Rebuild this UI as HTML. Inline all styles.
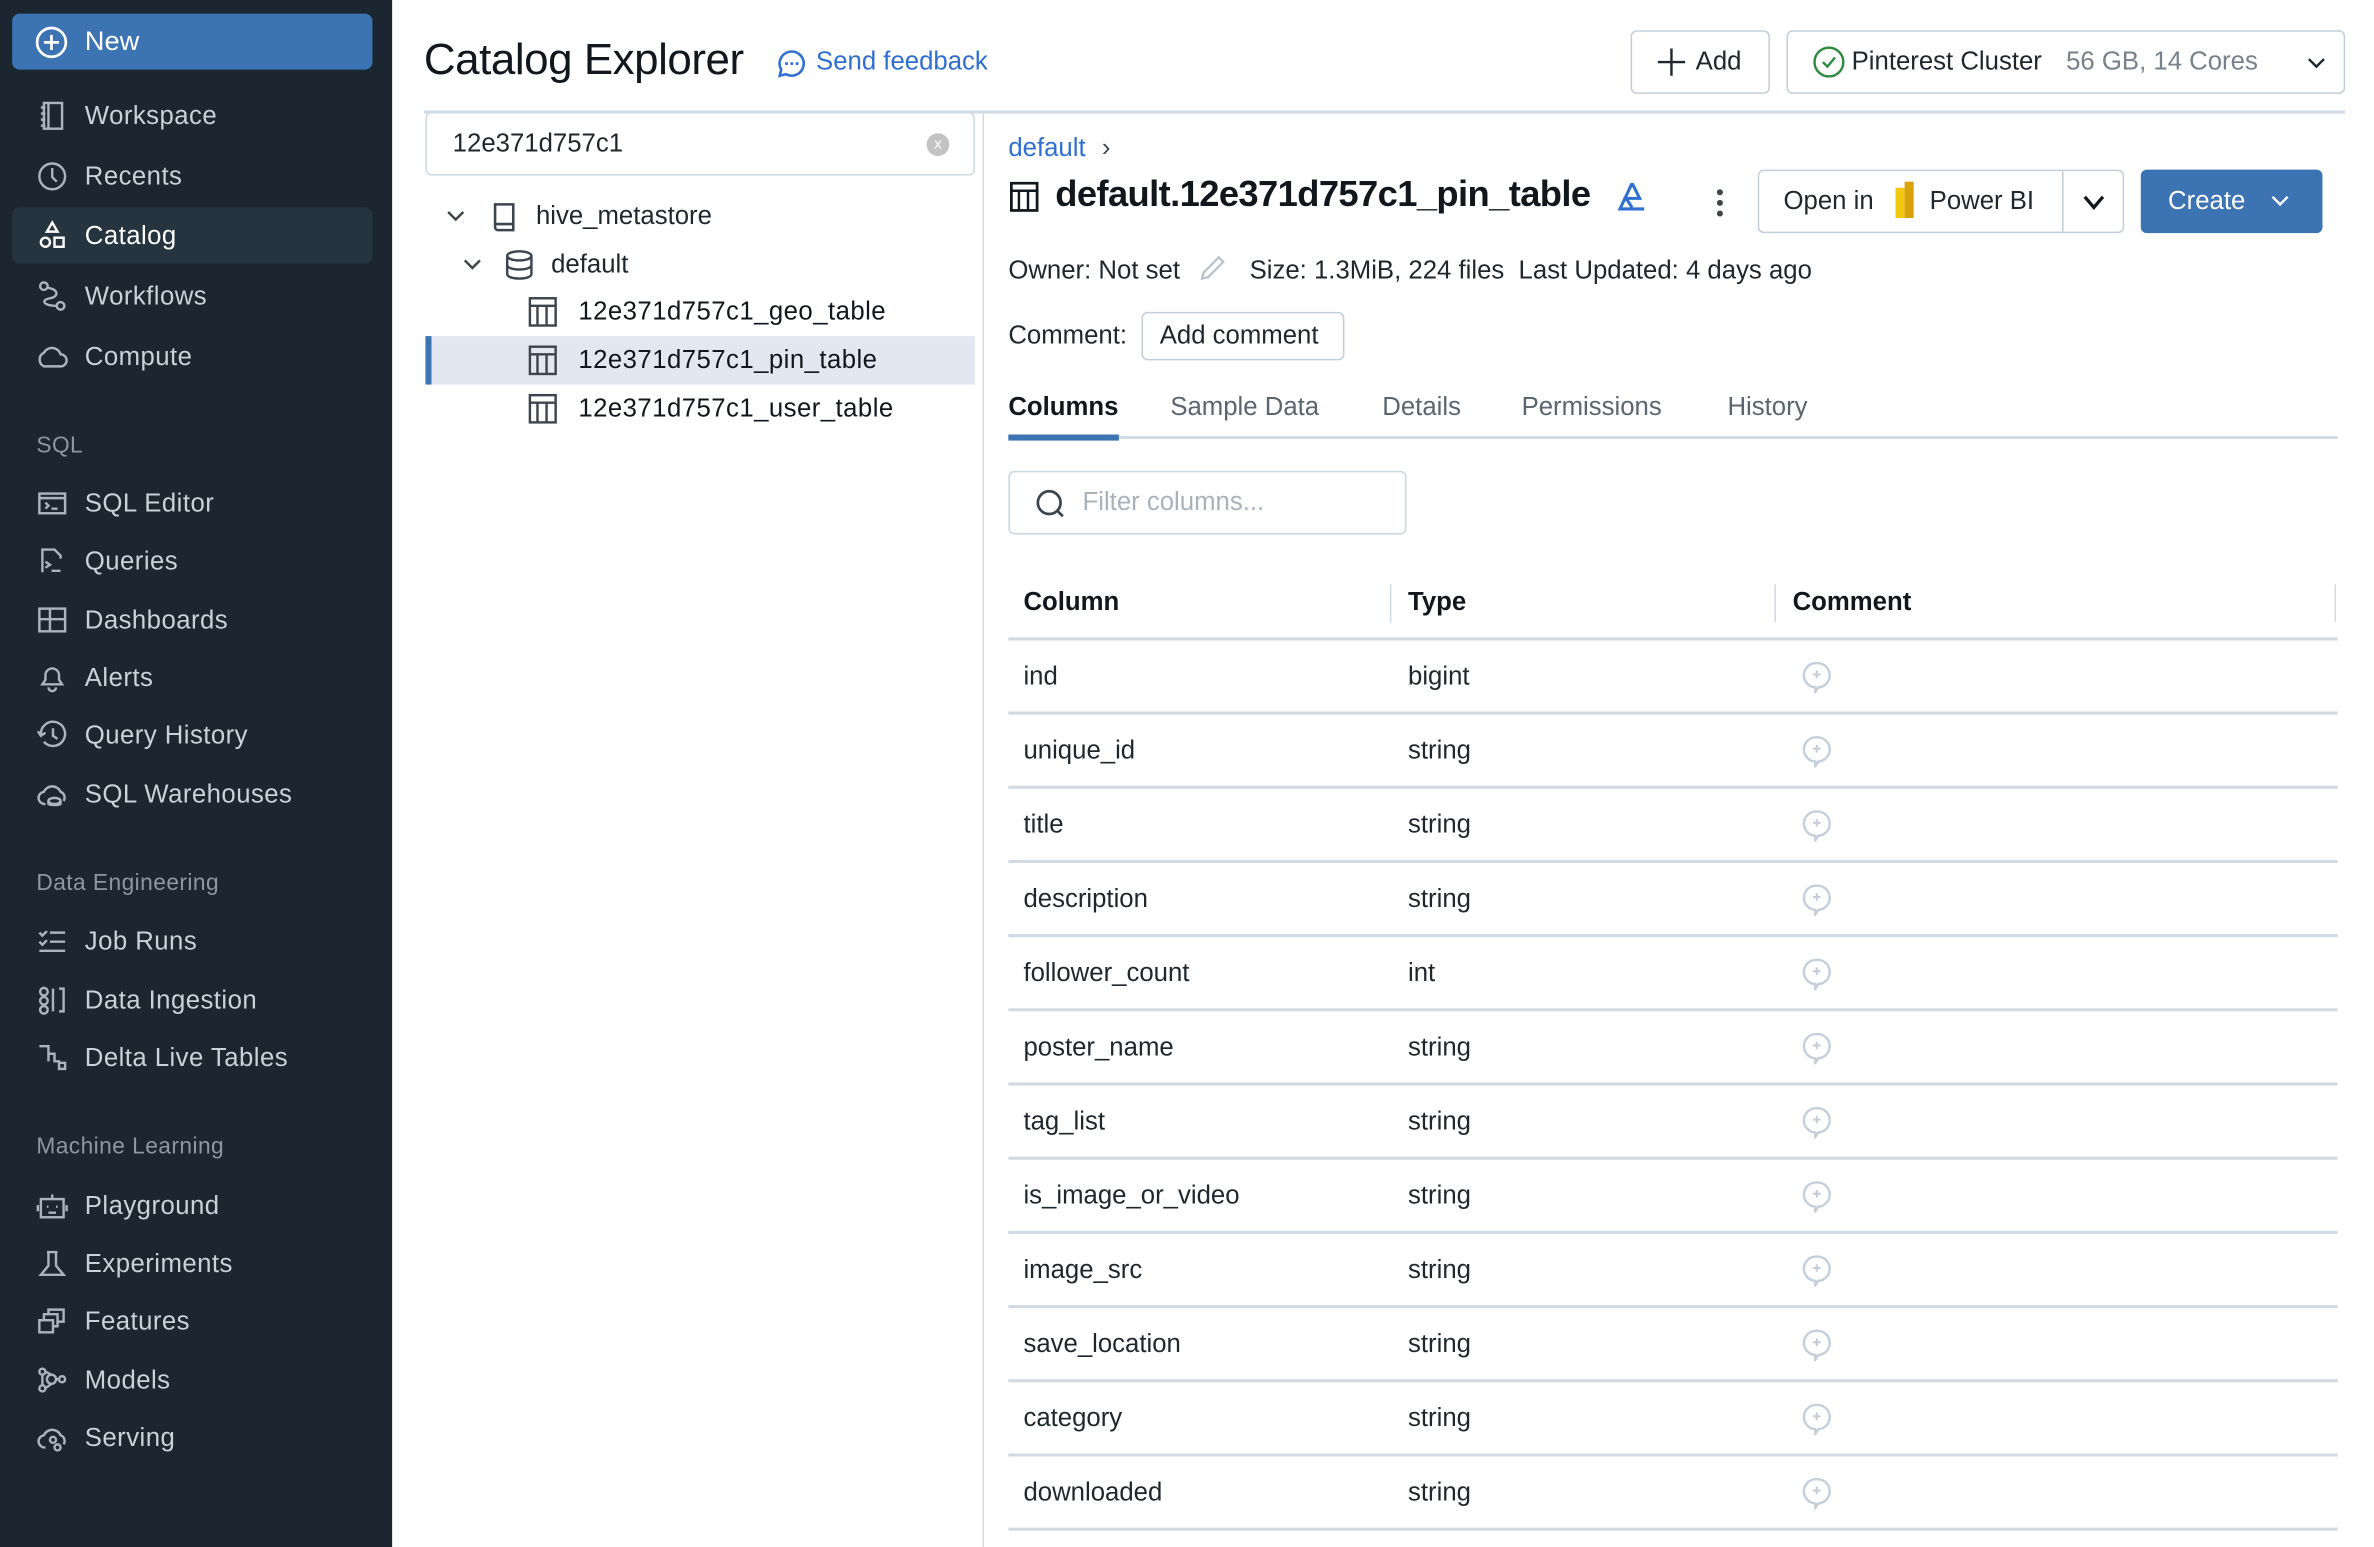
<!DOCTYPE html>
<html><head><meta charset="utf-8"><style>
*{box-sizing:border-box;margin:0;padding:0}
html,body{width:2374px;height:1546px;overflow:hidden;background:#fff}
#w{position:absolute;left:0;top:0;width:1568px;height:1022px;transform:scale(1.514);transform-origin:0 0;font-family:"Liberation Sans",sans-serif;color:#1f272d}
.a{position:absolute}
#sb{left:0;top:0;width:259px;height:1022px;background:#1b2631}
.it{position:absolute;left:8px;width:238px;height:37px;color:#c9d1d9;font-size:17px;line-height:37px;padding-left:48px;letter-spacing:.3px}
.it svg{position:absolute;left:16px;top:8px;width:21px;height:21px;fill:none;stroke:#aab4be;stroke-width:1.6}
.sec{position:absolute;left:24px;color:#8c97a2;font-size:15px;letter-spacing:.3px}
.hl{position:absolute;left:666px;width:878px;height:2px;background:#d1d9e1}
.row{position:absolute;font-size:17px;color:#1f272d}
.btn{position:absolute;border:1px solid #c5ced8;border-radius:4px;background:#fff}
.cm{position:absolute;left:1189px;width:22px;height:22px}
</style></head><body><div id="w">
<div id="sb" class="a">
 <div class="a" style="left:8px;top:9px;width:238px;height:37px;background:#3b73b3;border-radius:5px;color:#fff;font-size:18px;line-height:37px;padding-left:48px">New
  <svg class="a" style="left:15px;top:8px" width="22" height="22" viewBox="0 0 22 22"><circle cx="11" cy="11" r="9.5" fill="none" stroke="#fff" stroke-width="1.8"/><path d="M11 6v10M6 11h10" stroke="#fff" stroke-width="1.8"/></svg></div>
 <div class="it" style="top:58px"><svg viewBox="0 0 21 21"><rect x="5" y="2" width="12" height="17"/><path d="M3 5h3M3 9h3M3 13h3M3 17h3M8 2v17"/></svg>Workspace</div>
 <div class="it" style="top:98px"><svg viewBox="0 0 21 21"><circle cx="10.5" cy="10.5" r="8.5"/><path d="M10.5 5v6l3 3"/></svg>Recents</div>
 <div class="it" style="top:137px;background:#26343f;border-radius:5px;color:#fff"><svg viewBox="0 0 21 21" style="stroke:#fff"><path d="M10.5 2l3.5 6h-7z"/><circle cx="6" cy="15" r="3"/><rect x="12" y="12" width="6" height="6"/></svg>Catalog</div>
 <div class="it" style="top:177px"><svg viewBox="0 0 21 21"><circle cx="5" cy="4" r="2.5"/><circle cx="16" cy="17" r="2.5"/><path d="M7 5c8 1 8 6 2 7s-5 5 5 5"/></svg>Workflows</div>
 <div class="it" style="top:217px"><svg viewBox="0 0 21 21"><path d="M5 17h11a4 4 0 0 0 0-8 6 6 0 0 0-11-1 5 5 0 0 0 0 9z"/></svg>Compute</div>
 <div class="sec" style="top:286px">SQL</div>
 <div class="it" style="top:314px"><svg viewBox="0 0 21 21"><rect x="2" y="4" width="17" height="13"/><path d="M2 7h17M6 10l2 2-2 2M10 14h4"/></svg>SQL Editor</div>
 <div class="it" style="top:352px"><svg viewBox="0 0 21 21"><path d="M4 18V3h8l4 4v2M6 11l3 2-3 2M10 17h6"/></svg>Queries</div>
 <div class="it" style="top:391px"><svg viewBox="0 0 21 21"><rect x="2" y="3" width="17" height="15"/><path d="M2 10h17M9 3v15"/></svg>Dashboards</div>
 <div class="it" style="top:429px"><svg viewBox="0 0 21 21"><path d="M4 15h13l-2-3V9a4.5 4.5 0 0 0-9 0v3zM8 17a2.5 2.5 0 0 0 5 0"/></svg>Alerts</div>
 <div class="it" style="top:467px"><svg viewBox="0 0 21 21"><path d="M3 10a8 8 0 1 1 2 5M1 8l2 3 3-2M11 6v5l3 2"/></svg>Query History</div>
 <div class="it" style="top:506px"><svg viewBox="0 0 21 21"><path d="M6 17a4 4 0 0 1-1-8 6 6 0 0 1 11 0 4 4 0 0 1 2 6"/><ellipse cx="12" cy="15" rx="4" ry="2"/><path d="M8 15v2c0 1 8 1 8 0v-2"/></svg>SQL Warehouses</div>
 <div class="sec" style="top:575px">Data Engineering</div>
 <div class="it" style="top:603px"><svg viewBox="0 0 21 21"><path d="M2 5l2 2 3-3M2 11l2 2 3-3M9 5h10M9 11h10M2 17h17"/></svg>Job Runs</div>
 <div class="it" style="top:642px"><svg viewBox="0 0 21 21"><circle cx="5" cy="5" r="2.5"/><circle cx="5" cy="11" r="2.5"/><circle cx="5" cy="17" r="2.5"/><path d="M11 3v15M15 3h3v15h-3"/></svg>Data Ingestion</div>
 <div class="it" style="top:680px"><svg viewBox="0 0 21 21"><path d="M2 3h6v5h4v5h3v5h4v-4h-4M8 8v5"/></svg>Delta Live Tables</div>
 <div class="sec" style="top:749px">Machine Learning</div>
 <div class="it" style="top:778px"><svg viewBox="0 0 21 21"><rect x="3" y="6" width="15" height="12"/><path d="M10.5 3v3M1 10v4M20 10v4M7 11h1M13 11h1M8 15h5"/></svg>Playground</div>
 <div class="it" style="top:816px"><svg viewBox="0 0 21 21"><path d="M7 3h7M8 3v9l-5 6h15l-5-6V3"/></svg>Experiments</div>
 <div class="it" style="top:854px"><svg viewBox="0 0 21 21"><rect x="2" y="10" width="9" height="8"/><path d="M5 10V6h9v8h-3M8 6V3h10v8h-4"/></svg>Features</div>
 <div class="it" style="top:893px"><svg viewBox="0 0 21 21"><circle cx="4" cy="5" r="2"/><circle cx="4" cy="16" r="2"/><circle cx="17" cy="10" r="2"/><circle cx="10" cy="10" r="3"/><path d="M6 5l4 2M6 16l4-3M13 10h2M4 7v7"/></svg>Models</div>
 <div class="it" style="top:931px"><svg viewBox="0 0 21 21"><path d="M6 17a4 4 0 0 1-1-8 6 6 0 0 1 11 0 4 4 0 0 1 2 6"/><circle cx="11" cy="12" r="2"/><circle cx="14" cy="17" r="2"/></svg>Serving</div>
</div>

<div class="a" style="left:280px;top:24px;font-size:29px;font-weight:500;color:#11171c;letter-spacing:-.3px">Catalog Explorer</div>
<svg class="a" style="left:513px;top:32px" width="20" height="20" viewBox="0 0 20 20"><path d="M10 2a8 8 0 1 1-4 15l-4 1 1-4A8 8 0 0 1 10 2z" fill="none" stroke="#2f6fd1" stroke-width="1.7"/><circle cx="6.5" cy="10" r="1" fill="#2f6fd1"/><circle cx="10" cy="10" r="1" fill="#2f6fd1"/><circle cx="13.5" cy="10" r="1" fill="#2f6fd1"/></svg>
<div class="a" style="left:539px;top:31px;font-size:17px;color:#2f6fd1">Send feedback</div>

<div class="btn" style="left:1077px;top:20px;width:92px;height:42px;font-size:17px;line-height:40px;padding-left:42px">Add<svg class="a" style="left:16px;top:10px" width="20" height="20"><path d="M10 1v18M1 10h18" stroke="#1f272d" stroke-width="1.6"/></svg></div>
<div class="btn" style="left:1180px;top:20px;width:369px;height:42px;font-size:17px;line-height:40px;padding-left:42px">Pinterest Cluster<span style="color:#77818b;margin-left:16px">56 GB, 14 Cores</span>
 <svg class="a" style="left:16px;top:9px" width="22" height="22"><circle cx="11" cy="11" r="9.5" fill="none" stroke="#2d8a3e" stroke-width="1.6"/><path d="M7 11l3 3 5-6" fill="none" stroke="#2d8a3e" stroke-width="1.6"/></svg>
 <svg class="a" style="left:343px;top:16px" width="12" height="10"><path d="M1 2l5 5 5-5" fill="none" stroke="#1f272d" stroke-width="1.6"/></svg></div>

<div class="a" style="left:280px;top:73px;width:1269px;height:2px;background:#d1d9e1"></div>
<div class="a" style="left:649px;top:74px;width:1px;height:948px;background:#d1d9e1"></div>
<div class="btn" style="left:281px;top:74px;width:363px;height:42px;border-color:#d1d9e1;font-size:17px;line-height:40px;padding-left:17px">12e371d757c1<div class="a" style="left:330px;top:13px;width:15px;height:15px;border-radius:50%;background:#c3c3c3;color:#fff;font-size:10px;line-height:15px;text-align:center">x</div></div>

<svg class="a" style="left:294px;top:138px" width="14" height="10"><path d="M2 2l5 5 5-5" fill="none" stroke="#3c454d" stroke-width="1.6"/></svg>
<svg class="a" style="left:324px;top:133px" width="18" height="21"><path d="M3 2h12v17H5a2 2 0 0 1-2-2zM3 15h12" fill="none" stroke="#3c454d" stroke-width="1.7"/></svg>
<div class="row" style="left:354px;top:133px">hive_metastore</div>
<svg class="a" style="left:305px;top:170px" width="14" height="10"><path d="M2 2l5 5 5-5" fill="none" stroke="#3c454d" stroke-width="1.6"/></svg>
<svg class="a" style="left:333px;top:164px" width="20" height="22"><ellipse cx="10" cy="5" rx="8" ry="3" fill="none" stroke="#3c454d" stroke-width="1.6"/><path d="M2 5v12c0 4 16 4 16 0V5M2 11c0 4 16 4 16 0" fill="none" stroke="#3c454d" stroke-width="1.6"/></svg>
<div class="row" style="left:364px;top:165px">default</div>
<div class="a" style="left:281px;top:222px;width:363px;height:32px;background:#e2e8f1"></div>
<div class="a" style="left:281px;top:222px;width:4px;height:32px;background:#3b73b3"></div>
<svg class="a" style="left:349px;top:196px" width="20" height="84"><g fill="none" stroke="#3c454d" stroke-width="1.6"><rect x="1" y="1" width="17" height="18"/><path d="M1 6h17M6 6v13M12 6v13"/><rect x="1" y="33" width="17" height="18"/><path d="M1 38h17M6 38v13M12 38v13"/><rect x="1" y="65" width="17" height="18"/><path d="M1 70h17M6 70v13M12 70v13"/></g></svg>
<div class="row" style="left:382px;top:196px;letter-spacing:.3px;color:#11171c">12e371d757c1_geo_table</div>
<div class="row" style="left:382px;top:228px;letter-spacing:.3px;color:#11171c">12e371d757c1_pin_table</div>
<div class="row" style="left:382px;top:260px;letter-spacing:.3px;color:#11171c">12e371d757c1_user_table</div>

<div class="a" style="left:666px;top:88px;font-size:17px;color:#2f6fd1">default <span style="color:#3c454d;margin-left:6px">›</span></div>
<svg class="a" style="left:667px;top:120px" width="20" height="20"><rect x="1" y="1" width="17" height="18" fill="none" stroke="#11171c" stroke-width="1.8"/><path d="M1 6h17M6 6v13M12 6v13" stroke="#11171c" stroke-width="1.6"/></svg>
<div class="a" style="left:697px;top:115px;font-size:24px;font-weight:700;color:#11171c;letter-spacing:-.4px">default.12e371d757c1_pin_table</div>
<svg class="a" style="left:1067px;top:119px" width="22" height="22"><path d="M11 2L3 19h16M11 2l5 10-9 0 4 6" fill="none" stroke="#2f6fd1" stroke-width="2"/></svg>
<div class="a" style="left:1134px;top:125px;width:4px;height:4px;border-radius:2px;background:#3c454d;box-shadow:0 7px 0 #3c454d,0 14px 0 #3c454d"></div>
<div class="btn" style="left:1161px;top:112px;width:242px;height:42px;font-size:17px;line-height:40px;padding-left:16px">Open in<div class="a" style="left:90px;top:11px;width:6px;height:20px;background:#f2c811"></div><div class="a" style="left:96px;top:7px;width:6px;height:24px;background:#d8a20c"></div><span style="margin-left:37px">Power BI</span>
 <div class="a" style="left:200px;top:0;width:1px;height:40px;background:#c5ced8"></div>
 <svg class="a" style="left:213px;top:15px" width="16" height="12"><path d="M2 2l6 7 6-7" fill="none" stroke="#11171c" stroke-width="2.2"/></svg></div>
<div class="a" style="left:1414px;top:112px;width:120px;height:42px;background:#3b73b3;border-radius:4px;color:#fff;font-size:17px;line-height:42px;padding-left:18px">Create<svg class="a" style="left:86px;top:16px" width="12" height="10"><path d="M1 2l5 5 5-5" fill="none" stroke="#fff" stroke-width="1.6"/></svg></div>

<div class="a" style="left:666px;top:167px;font-size:17px">Owner: Not set<svg style="margin:0 14px 0 12px;vertical-align:-3px" width="20" height="20"><path d="M3 17l1-4L14 3l3 3L7 16z" fill="none" stroke="#b8c2cc" stroke-width="1.5"/></svg>Size: 1.3MiB, 224 files&nbsp; Last Updated: 4 days ago</div>
<div class="a" style="left:666px;top:212px;font-size:17px">Comment:</div>
<div class="btn" style="left:754px;top:206px;width:134px;height:32px;font-size:17px;line-height:30px;padding-left:11px">Add comment</div>

<div class="a" style="left:666px;top:259px;font-size:17px;font-weight:700;color:#11171c">Columns</div>
<div class="a" style="left:773px;top:259px;font-size:17px;color:#5a6570">Sample Data</div>
<div class="a" style="left:913px;top:259px;font-size:17px;color:#5a6570">Details</div>
<div class="a" style="left:1005px;top:259px;font-size:17px;color:#5a6570">Permissions</div>
<div class="a" style="left:1141px;top:259px;font-size:17px;color:#5a6570">History</div>
<div class="a" style="left:666px;top:288px;width:878px;height:2px;background:#d1d9e1"></div>
<div class="a" style="left:666px;top:287px;width:73px;height:4px;background:#3b73b3"></div>

<div class="btn" style="left:666px;top:311px;width:263px;height:42px;border-color:#cdd6e0;font-size:17px;line-height:40px;padding-left:48px;color:#a9b2bb">Filter columns...<svg class="a" style="left:16px;top:10px" width="22" height="22"><circle cx="10" cy="10" r="7.5" fill="none" stroke="#3c454d" stroke-width="1.8"/><path d="M15 15l4 4" stroke="#3c454d" stroke-width="1.8"/></svg></div>

<div class="a" style="left:676px;top:388px;font-size:17px;font-weight:700;color:#11171c">Column</div>
<div class="a" style="left:930px;top:388px;font-size:17px;font-weight:700;color:#11171c">Type</div>
<div class="a" style="left:1184px;top:388px;font-size:17px;font-weight:700;color:#11171c">Comment</div>
<div class="a" style="left:918px;top:386px;width:1px;height:25px;background:#d1d9e1"></div>
<div class="a" style="left:1172px;top:386px;width:1px;height:25px;background:#d1d9e1"></div>
<div class="a" style="left:1542px;top:386px;width:1px;height:25px;background:#d1d9e1"></div>
<div class="hl" style="top:421px"></div>

<div id="rows"></div>
<script>
var d=[["ind","bigint"],["unique_id","string"],["title","string"],["description","string"],["follower_count","int"],["poster_name","string"],["tag_list","string"],["is_image_or_video","string"],["image_src","string"],["save_location","string"],["category","string"],["downloaded","string"]];
var h="";d.forEach(function(r,i){var y=422+i*49;
h+='<div class="row" style="left:676px;top:'+(y+15)+'px">'+r[0]+'</div><div class="row" style="left:930px;top:'+(y+15)+'px">'+r[1]+'</div>'+
'<svg class="cm" style="top:'+(y+14)+'px" viewBox="0 0 22 22"><path d="M11 2a8 8 0 0 1 1 16l-2 3v-3a8 8 0 0 1 1-16z" fill="none" stroke="#c4cfdb" stroke-width="1.6"/><path d="M11 7v5M8.5 9.5h5" stroke="#c4cfdb" stroke-width="1.4"/></svg>'+
'<div class="hl" style="top:'+(y+48)+'px"></div>';});
document.getElementById("rows").outerHTML=h;
</script>
</div></body></html>
